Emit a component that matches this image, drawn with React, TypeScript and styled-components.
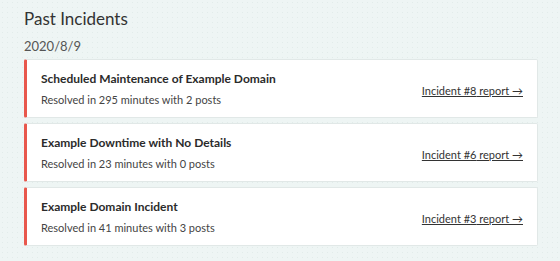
import React from 'react'
import styled, { createGlobalStyle } from 'styled-components'

const GlobalStyle = createGlobalStyle`
  html, body {
    margin: 0;
    padding: 0;
  }
  body {
    background-color: #eef5f4;
    background-image: radial-gradient(#e2ecea 0.6px, transparent 0.8px);
    background-size: 5px 5px;
    font-family: Lato, 'Noto Sans', sans-serif;
    color: #333;
  }
`

const Page = styled.div`
  padding: 6px 22px 14px 24px;
`

const Heading = styled.h2`
  margin: 0;
  font-size: 17px;
  font-weight: 400;
  line-height: 26px;
  color: #333;
`

const DateLabel = styled.div`
  margin-top: 5px;
  font-size: 13px;
  line-height: 18px;
  color: #555;
`

const List = styled.div`
  display: flex;
  flex-direction: column;
  gap: 5px;
  margin-top: 4px;
`

const Card = styled.div`
  display: flex;
  align-items: center;
  justify-content: space-between;
  height: 59px;
  box-sizing: border-box;
  padding: 0 14px 0 14px;
  background: #fff;
  border: 1px solid #e1e8e7;
  border-left: 3px solid #e8574c;
  border-radius: 2px;
`

const Info = styled.div`
  display: flex;
  flex-direction: column;
  gap: 4px;
`

const Title = styled.div`
  font-size: 12px;
  font-weight: 700;
  line-height: 17px;
  color: #2b2b2b;
`

const Summary = styled.div`
  font-size: 11px;
  line-height: 17px;
  color: #444;
`

const ReportLink = styled.a`
  font-size: 11px;
  color: #333;
  text-decoration: underline;
  margin-top: 3px;
`

const incidents = [
  { id: 8, title: 'Scheduled Maintenance of Example Domain', minutes: 295, posts: 2 },
  { id: 6, title: 'Example Downtime with No Details', minutes: 23, posts: 0 },
  { id: 3, title: 'Example Domain Incident', minutes: 41, posts: 3 },
]

const App: React.FC = () => {
  return (
    <>
      <GlobalStyle />
      <Page>
        <Heading>Past Incidents</Heading>
        <DateLabel>2020/8/9</DateLabel>
        <List>
          {incidents.map((inc) => (
            <Card key={inc.id}>
              <Info>
                <Title>{inc.title}</Title>
                <Summary>
                  Resolved in {inc.minutes} minutes with {inc.posts} posts
                </Summary>
              </Info>
              <ReportLink href="#">Incident #{inc.id} report →</ReportLink>
            </Card>
          ))}
        </List>
      </Page>
    </>
  )
}

export default App
